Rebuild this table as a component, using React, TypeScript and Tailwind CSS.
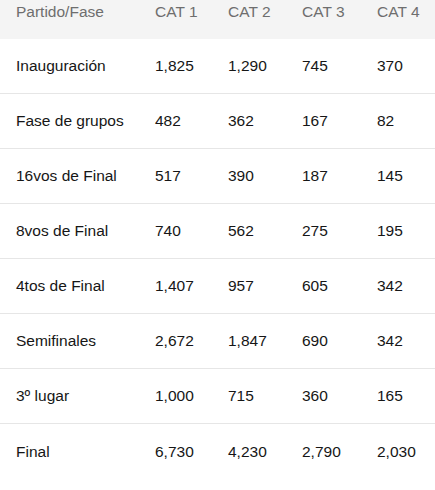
import React from 'react';

const rows: string[][] = [
  ['Inauguración', '1,825', '1,290', '745', '370'],
  ['Fase de grupos', '482', '362', '167', '82'],
  ['16vos de Final', '517', '390', '187', '145'],
  ['8vos de Final', '740', '562', '275', '195'],
  ['4tos de Final', '1,407', '957', '605', '342'],
  ['Semifinales', '2,672', '1,847', '690', '342'],
  ['3º lugar', '1,000', '715', '360', '165'],
  ['Final', '6,730', '4,230', '2,790', '2,030'],
];

const headers = ['Partido/Fase', 'CAT 1', 'CAT 2', 'CAT 3', 'CAT 4'];

export default function App() {
  return (
    <div className="w-[435px] h-[490px] bg-white font-['Liberation_Sans',Arial,sans-serif] text-[15.5px] overflow-hidden">
      {/* Header */}
      <div className="grid grid-cols-[139px_73px_74px_75px_74px] h-[39px] bg-[#f4f4f4] text-[#6e6e6e] leading-6">
        {headers.map((h, i) => (
          <div key={h} className={i === 0 ? 'pl-4' : 'pl-4'}>
            {h}
          </div>
        ))}
      </div>

      {/* Rows */}
      {rows.map((r, idx) => (
        <div
          key={r[0]}
          className={`grid grid-cols-[139px_73px_74px_75px_74px] items-center text-[#161616] ${
            idx === rows.length - 1 ? 'h-[55px]' : 'h-[55px] border-b border-[#e6e6e6]'
          }`}
        >
          {r.map((c, i) => (
            <div key={i} className="pl-4">
              {c}
            </div>
          ))}
        </div>
      ))}
    </div>
  );
}
